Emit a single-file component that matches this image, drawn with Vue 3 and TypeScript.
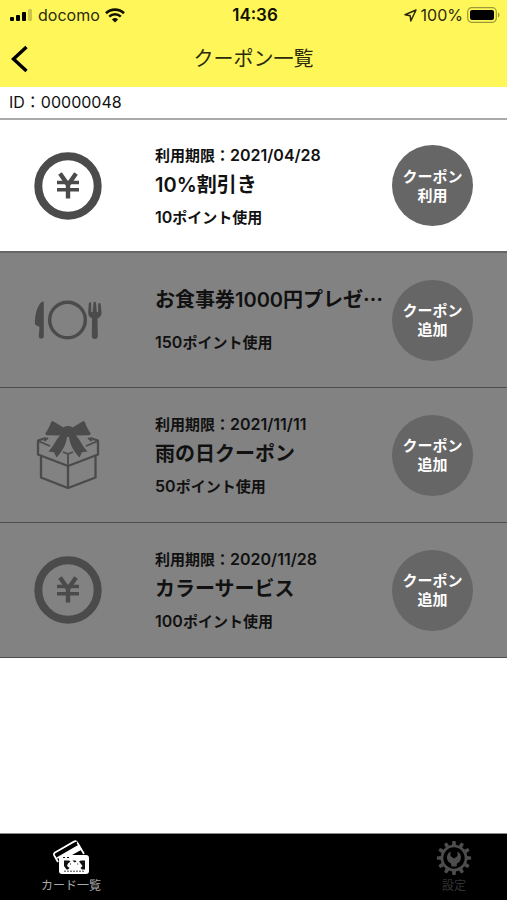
<script setup lang="ts">
type IconName = 'yen' | 'meal' | 'gift'

interface Coupon {
  id: number
  icon: IconName
  expires?: string
  title: string
  truncated?: boolean
  points: number
  owned: boolean
}

const userId = '00000048'

const coupons: Coupon[] = [
  { id: 1, icon: 'yen', expires: '2021/04/28', title: '10%割引き', points: 10, owned: true },
  { id: 2, icon: 'meal', title: 'お食事券1000円プレゼ', truncated: true, points: 150, owned: false },
  { id: 3, icon: 'gift', expires: '2021/11/11', title: '雨の日クーポン', points: 50, owned: false },
  { id: 4, icon: 'yen', expires: '2020/11/28', title: 'カラーサービス', points: 100, owned: false },
]

const teeth = Array.from({ length: 12 }, (_, i) => i * 30)
</script>

<template>
  <div class="app" lang="ja">
    <header class="top">
      <div class="status">
        <div class="status-side">
          <svg width="23" height="12" viewBox="0 0 23 12" aria-hidden="true">
            <rect x="0" y="8" width="4" height="4" rx="1" />
            <rect x="6" y="6" width="4" height="6" rx="1" />
            <rect x="12" y="3" width="4" height="9" rx="1" />
            <rect x="18" y="0" width="4" height="12" rx="1" opacity=".2" />
          </svg>
          <span>docomo</span>
          <svg width="20" height="15" viewBox="0 0 20 15" fill="none" stroke="#111100" aria-hidden="true">
            <path d="M1 5.2a13 13 0 0 1 18 0" stroke-width="2.6" />
            <path d="M4.2 8.6a8.4 8.4 0 0 1 11.6 0" stroke-width="2.5" />
            <path d="M10 14.5 6.9 11.4a4.5 4.5 0 0 1 6.2 0z" fill="#111100" stroke="none" />
          </svg>
        </div>
        <time class="clock">14:36</time>
        <div class="status-side status-right">
          <svg width="13" height="13" viewBox="0 0 13 13" fill="none" stroke="#2b2a0c" stroke-width="1.5" stroke-linejoin="round" aria-hidden="true">
            <path d="M12 1 1 5.8l5.2.9.6 5.3z" />
          </svg>
          <span>100%</span>
          <svg width="33" height="16" viewBox="0 0 33 16" aria-hidden="true">
            <rect x=".7" y=".7" width="28.6" height="14.6" rx="4" fill="none" stroke="#9b983a" stroke-width="1.2" />
            <rect x="3" y="3" width="24" height="10" rx="2" />
            <path d="M31 5.500c2 .8 2 4.200 0 5z" fill="#9b983a" />
          </svg>
        </div>
      </div>
      <div class="nav">
        <button class="back" type="button" aria-label="戻る">
          <svg width="17" height="28" viewBox="0 0 17 28" fill="none" stroke="#000" stroke-width="3.4" aria-hidden="true">
            <path d="M15.500 2 2.500 14l13 12" />
          </svg>
        </button>
        <h1>クーポン一覧</h1>
      </div>
    </header>

    <p class="user-id">ID<span class="colon">：</span>{{ userId }}</p>

    <main>
      <ul class="coupons">
        <li v-for="c in coupons" :key="c.id" class="coupon" :class="{ locked: !c.owned }">
          <div class="picture">
            <svg v-if="c.icon === 'yen'" width="68" height="68" viewBox="0 0 68 68" fill="none" stroke="currentColor" aria-hidden="true">
              <circle cx="34" cy="34" r="29.700" stroke-width="8" />
              <path d="M26 21.500 34 33l8-11.500M34 32v14.500" stroke-width="4.400" />
              <path d="M23 30.500h22M23 37.700h22" stroke-width="3.400" />
            </svg>
            <svg v-else-if="c.icon === 'meal'" width="68" height="68" viewBox="0 0 68 68" fill="currentColor" aria-hidden="true">
              <path d="M9.800 17V50.500a2 2 0 0 1-2 2H6.800a2 2 0 0 1-2-2L5.500 41 1 38.500C.5 30 3 20 7.500 16c1-.9 2.300-.6 2.300 1z" />
              <circle cx="33.500" cy="34" r="17.800" fill="none" stroke="currentColor" stroke-width="3.400" />
              <path d="M54.800 17.500a1.200 1.200 0 0 1 2.400 0v8c0 1 1.400 1 1.500 0l.7-8.500a1.300 1.300 0 0 1 2.600 0l.7 8.500c.1 1 1.500 1 1.500 0v-7.500a1.300 1.300 0 0 1 2.400-.2l.9 8.200c.4 3.500-1.500 5.400-4 6.300l.3 17.700a3 3 0 0 1-6 0l.2-17.700c-2.800-1-4-3-3.800-6.300z" />
            </svg>
            <svg v-else width="68" height="68" viewBox="0 0 68 68" fill="none" stroke="currentColor" stroke-width="2.300" stroke-linejoin="round" aria-hidden="true">
              <path d="M7 35v21.500L34 67l27.500-10.500V35M34 45v22" />
              <path d="M12 17 4 19.500v14L34 45l30-11.500v-14L56 17" />
              <path d="m4 20 12 5M64 20l-12 5M34 33v12M34 33l-5-2M34 33l5-2M10 20l4-3M58 20l-4-3" stroke-width="1.800" />
              <path d="M29.500 6.500 19.500.5c-1-.7-2-.4-2.500.8-1.500 4.500-3.300 7.700-5.100 10.200-.9 1.300-.3 2.600 1.200 2.700l13 .3-3 3.500c-2.500 4.500-5 8.500-8.600 12.500l5.500.7 2.500 5.300c5.500-6 9.500-12.500 10.500-20.500h2c1 8 5 14.500 10.500 20.500l2.500-5.300 5.500-.7c-3.600-4-6.100-8-8.600-12.500l-3-3.500 13-.3c1.500-.1 2.100-1.400 1.200-2.700C54.300 9 52.500 5.800 51 1.300c-.5-1.200-1.500-1.500-2.500-.8l-10 6c-2.500-2-6.500-2-9 0z" fill="currentColor" stroke="none" />
            </svg>
          </div>
          <div class="details" :class="{ spaced: !c.expires }">
            <p v-if="c.expires" class="expires">利用期限：<span class="number">{{ c.expires }}</span></p>
            <h2>{{ c.title }}<span v-if="c.truncated" class="ellipsis">…</span></h2>
            <p class="points"><span class="number">{{ c.points }}</span>ポイント使用</p>
          </div>
          <button class="action" type="button">クーポン<br />{{ c.owned ? '利用' : '追加' }}</button>
        </li>
      </ul>
    </main>

    <nav class="tabs">
      <a class="tab active" href="#cards" aria-current="page">
        <svg width="38" height="36" viewBox="0 0 38 36" fill="none" aria-hidden="true">
          <path d="M6 22 2.300 15.500c-.6-1.200-.3-2.300.8-3L22 1.600c1.300-.7 2.400-.4 3.200.8L32 14" stroke="#fff" stroke-width="1.800" />
          <path d="m4.500 17.500 22.500-13 3 5-10 5.500H9l-3 4z" fill="#fff" />
          <path d="m3 14.800 22-12.700" stroke="#000" stroke-width="1.500" />
          <rect x="7" y="15" width="30" height="19" rx="3" fill="#fff" />
          <path d="M11 17.500h2M15 17.500h2" stroke="#111" stroke-width="1.200" />
          <path d="M12 20.500h5l1.500 1-2.500 2-1 2.500 2.500 2-1.500 1.500h-1.500L12 26zM33 20.500h-4l-2 1 2 2.500 1.500 2-2 2 1.500 1.500h3zM20.500 20.500h3l1 1-2 1zM18 24l1-1v2zM26.500 24l-1-1v2z" fill="#111" />
          <path d="M12 31.200h21" stroke="#444" stroke-width="1" stroke-dasharray="2 1" />
        </svg>
        <span>カード一覧</span>
      </a>
      <a class="tab" href="#settings">
        <svg width="38" height="36" viewBox="-19 -18 38 36" fill="currentColor" aria-hidden="true">
          <circle r="12" fill="none" stroke="currentColor" stroke-width="2.600" />
          <path v-for="a in teeth" :key="a" d="m-2-12.800.4-4.300h3.200l.4 4.300z" :transform="`rotate(${a})`" />
          <path d="M-3.500-6.500C-8.500-3.500-8 3.500-3 5.500L-2.500 8.500h5L3 5.500C8 3.500 8.500-3.500 3.500-6.500V-2L0 .5l-3.500-2.500z" />
        </svg>
        <span>設定</span>
      </a>
    </nav>
  </div>
</template>

<style>
body {
  margin: 0;
  background: #fff;
}
</style>

<style scoped>
.app {
  display: flex;
  flex-direction: column;
  min-height: 100vh;
  font-family: Inter, "Noto Sans CJK JP", sans-serif;
  color: #111;
}

h1,
h2,
p,
ul {
  margin: 0;
  padding: 0;
}

svg {
  display: block;
}

.top {
  background: #fff75a;
}

.status {
  display: grid;
  grid-template-columns: 1fr auto 1fr;
  align-items: center;
  height: 30px;
  padding: 0 7px 0 10px;
  font-size: 16px;
  line-height: 20px;
  color: #2b2a0c;
}

.status-side {
  display: flex;
  align-items: center;
  gap: 5px;
}

.status-right {
  justify-content: flex-end;
  gap: 4px;
}

.clock {
  font-size: 17px;
  font-weight: 600;
  color: #111100;
}

.nav {
  display: grid;
  grid-template-columns: 48px 1fr 48px;
  align-items: center;
  height: 57px;
}

.back {
  justify-self: start;
  padding: 0 11px;
  border: 0;
  background: none;
  cursor: pointer;
}

.nav h1 {
  font-size: 20px;
  font-weight: 400;
  line-height: 28px;
  text-align: center;
  color: #2b2a0c;
}

.user-id {
  padding: 0 9px;
  border-bottom: 2px solid #aaa;
  font-size: 16px;
  line-height: 31px;
}

.colon {
  font-size: 16px;
}

main {
  flex: 1;
}

.coupons {
  list-style: none;
}

.coupon {
  display: grid;
  grid-template-columns: 155px 1fr 115px;
  align-items: center;
  min-height: 131px;
  border-bottom: 2px solid #666;
}

.coupon.locked {
  min-height: 134px;
  border-bottom-width: 1px;
  border-bottom-color: #4d4d4d;
  background: #828282;
}

.picture {
  padding-left: 34px;
  color: #4b4b4b;
}

.details {
  display: flex;
  flex-direction: column;
  min-width: 0;
  padding-top: 4px;
  white-space: nowrap;
}

.details.spaced {
  gap: 10px;
  padding: 0 0 2px;
}

.expires,
.points {
  font-size: 15px;
  font-weight: 600;
  line-height: 22px;
}

.points {
  line-height: 28px;
}

.number {
  font-size: 16px;
}

.details h2 {
  font-size: 20px;
  font-weight: 600;
  line-height: 36px;
}

.ellipsis {
  font-family: "Noto Sans CJK JP", sans-serif;
}

.action {
  width: 81px;
  height: 81px;
  padding: 0;
  border: 0;
  border-radius: 50%;
  background: #666;
  color: #fff;
  font-family: inherit;
  font-size: 15px;
  font-weight: 600;
  line-height: 19px;
  cursor: pointer;
}

.tabs {
  display: flex;
  justify-content: space-between;
  padding: 6px 17px 4px;
  border-top: 1px solid #888;
  background: #000;
}

.tab {
  display: flex;
  flex-direction: column;
  align-items: center;
  width: 72px;
  margin: 0 18px;
  color: #4d4d4d;
  font-size: 12px;
  line-height: 20px;
  text-decoration: none;
}

.tab:last-child {
  margin-right: 0;
}

.tab span {
  color: #333;
}

.tab.active span {
  color: #aaa;
}
</style>
